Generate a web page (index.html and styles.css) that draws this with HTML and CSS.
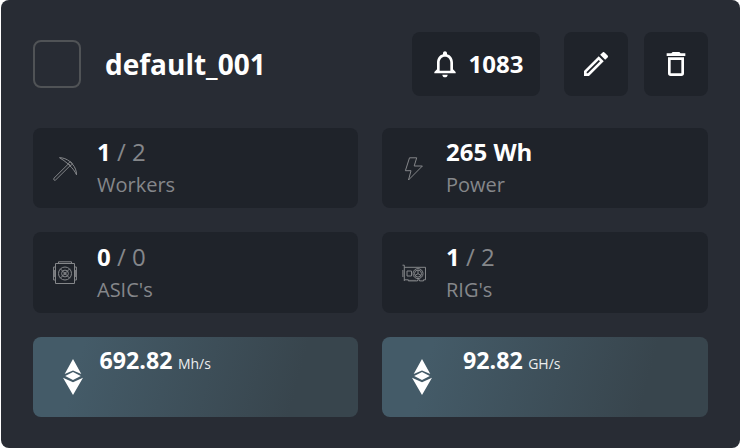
FILE: index.html
```html
<!DOCTYPE html>
<html lang="en">
<head>
<meta charset="utf-8">
<title>default_001</title>
<link rel="stylesheet" href="styles.css">
</head>
<body>
<main class="card">
  <header class="header">
    <span class="checkbox" role="checkbox" aria-checked="false"></span>
    <h1 class="title">default_001</h1>
    <button class="button alerts">
      <svg width="32" height="32" viewBox="0 0 24 24" fill="currentColor"><path d="M12 22c1.100 0 2-.9 2-2h-4c0 1.100.9 2 2 2zm6-6v-5c0-3.070-1.630-5.640-4.500-6.320V4c0-.83-.67-1.500-1.500-1.500s-1.500.67-1.500 1.500v.68C7.640 5.360 6 7.920 6 11v5l-2 2v1h16v-1l-2-2zm-2 1H8v-6c0-2.480 1.510-4.500 4-4.500s4 2.020 4 4.500v6z"/></svg>
      <span>1083</span>
    </button>
    <button class="button edit">
      <svg width="32" height="32" viewBox="0 0 24 24" fill="currentColor"><path d="M14.060 9.020l.92.92L5.920 19H5v-.92zM17.660 3c-.25 0-.51.1-.7.290l-1.830 1.830 3.750 3.750 1.830-1.830a1 1 0 0 0 0-1.410l-2.340-2.340A1 1 0 0 0 17.660 3M14.060 6.190 3 17.250V21h3.750L17.810 9.940z"/></svg>
    </button>
    <button class="button remove">
      <svg width="32" height="32" viewBox="0 0 24 24" fill="currentColor"><path d="M6 19a2 2 0 0 0 2 2h8a2 2 0 0 0 2-2V7H6zM8 9h8v10H8zM15.500 4l-1-1h-5l-1 1H5v2h14V4z"/></svg>
    </button>
  </header>
  <section class="grid">
    <div class="tile">
      <svg class="icon" viewBox="0 0 24 24"><path d="M15.800 6.500 1 21.200a1.200 1.200 0 0 0 1.700 1.700L17.600 8.200M6.500.7C10 .6 14 2.200 16.800 4.500L19.500 7.200C22 10 23.700 14 23.500 17.800 21.800 14 19.500 11.300 17 8.900L15.200 7C12.500 4.600 9.500 2.500 6.500.7ZM15.300 6.500l2-2 2.300 2.300-2 2z"/></svg>
      <div><p class="value"><b>1</b> / 2</p><p class="label">Workers</p></div>
    </div>
    <div class="tile">
      <svg class="icon" viewBox="0 0 24 24"><path d="M7.500.8h7.200L12.200 9h8.200L6.500 23 9 13.700H3.400z"/></svg>
      <div><p class="value"><b>265 Wh</b></p><p class="label">Power</p></div>
    </div>
    <div class="tile">
      <svg class="icon" viewBox="0 0 24 24"><path d="M2.500 2.500h19v20h-19zM5.500 2.300V.8h13v1.500M2 6H.6v13H2M22 6h1.400v13H22M1.300 9v7M22.700 9v7"/><circle cx="12" cy="12.500" r="6.500"/><circle cx="12" cy="12.500" r="3.400"/><circle cx="12" cy="12.500" r="1"/><path d="m7.300 7.800 9.400 9.400M16.700 7.800l-9.400 9.400"/></svg>
      <div><p class="value"><b>0</b> / 0</p><p class="label">ASIC's</p></div>
    </div>
    <div class="tile">
      <svg class="icon" viewBox="0 0 24 24"><path d="M.5 4.200h1.800V20M2.300 6.300h21.200v12.500h-2v1.100h-4v-1.100h-2v1.100H6.300v-1.100h-4M.9 9v7M5 10h4.500v5H5zM7 18.800v1.100M9 18.800v1.100M11 18.800v1.100M13 18.800v1.100"/><circle cx="16" cy="12.600" r="5"/><circle cx="16" cy="12.600" r="3.500"/><path d="M16 9.100v3.500l-3 2M16 12.600l3 2"/></svg>
      <div><p class="value"><b>1</b> / 2</p><p class="label">RIG's</p></div>
    </div>
    <div class="tile rate">
      <svg class="coin" viewBox="0 0 20 36" fill="currentColor"><path d="M10 0 18.300 15 10 11.500 1.700 15zM10 13l7.800 4L10 21l-7.800-4zM0 18.700l10 4.500 10-4.500L10 36z"/></svg>
      <p class="speed"><b>692.82</b> <small>Mh/s</small></p>
    </div>
    <div class="tile rate second">
      <svg class="coin" viewBox="0 0 20 36" fill="currentColor"><path d="M10 0 18.300 15 10 11.500 1.700 15zM10 13l7.800 4L10 21l-7.800-4zM0 18.700l10 4.500 10-4.500L10 36z"/></svg>
      <p class="speed"><b>92.82</b> <small>GH/s</small></p>
    </div>
  </section>
</main>
</body>
</html>
```
FILE: styles.css
```css
* { box-sizing: border-box; }
body {
  margin: 0;
  background: #fff;
  font-family: "Open Sans", sans-serif;
  color: #fff;
}
.card {
  height: 448px;
  margin: 0 1px;
  padding: 31.500px 32px 0 32px;
  border-radius: 8px;
  background: #282c34;
}
.header {
  display: flex;
  align-items: center;
  width: 675px;
  height: 64px;
}
.checkbox {
  width: 48px;
  height: 48px;
  border: 2px solid #505356;
  border-radius: 8px;
}
.title {
  flex: 1;
  margin: 0 0 0 24px;
  font-size: 28px;
  line-height: 38px;
  font-weight: 700;
}
.button {
  display: flex;
  align-items: center;
  justify-content: center;
  width: 64px;
  height: 64px;
  padding: 0;
  border: 0;
  border-radius: 8px;
  background: #1f232a;
  color: #fff;
  font: 700 24px/32px "Open Sans", sans-serif;
}
.alerts { width: 128px; gap: 8px; }
.edit { margin-left: 24px; }
.remove { margin-left: 16px; }
.grid {
  display: grid;
  grid-template-columns: 325px 326px;
  grid-auto-rows: 80.500px;
  gap: 24px;
  margin-top: 32px;
}
.tile {
  display: flex;
  align-items: center;
  padding: 1.500px 0 0 20px;
  border-radius: 8px;
  background: #1f232a;
}
.icon {
  width: 24px;
  height: 24px;
  margin-right: 20px;
  fill: none;
  stroke: #85878a;
  stroke-width: 1;
}
p { margin: 0; }
.value {
  color: #85878a;
  font-size: 24px;
  line-height: 32px;
}
.value b { color: #fff; }
.label {
  color: #85878a;
  font-size: 20px;
  line-height: 33px;
}
.rate {
  padding: 0 0 0 30px;
  background: linear-gradient(105deg, #445b68 15%, #38454d 80%);
}
.coin { width: 20px; height: 36px; }
.speed {
  align-self: flex-start;
  margin: 7.500px 0 0 16.500px;
  font-size: 23.200px;
  line-height: 32px;
}
.second .speed { margin-left: 31px; }
.speed small { font-size: 14px; margin-left: -.5px; opacity: .9; }
```
